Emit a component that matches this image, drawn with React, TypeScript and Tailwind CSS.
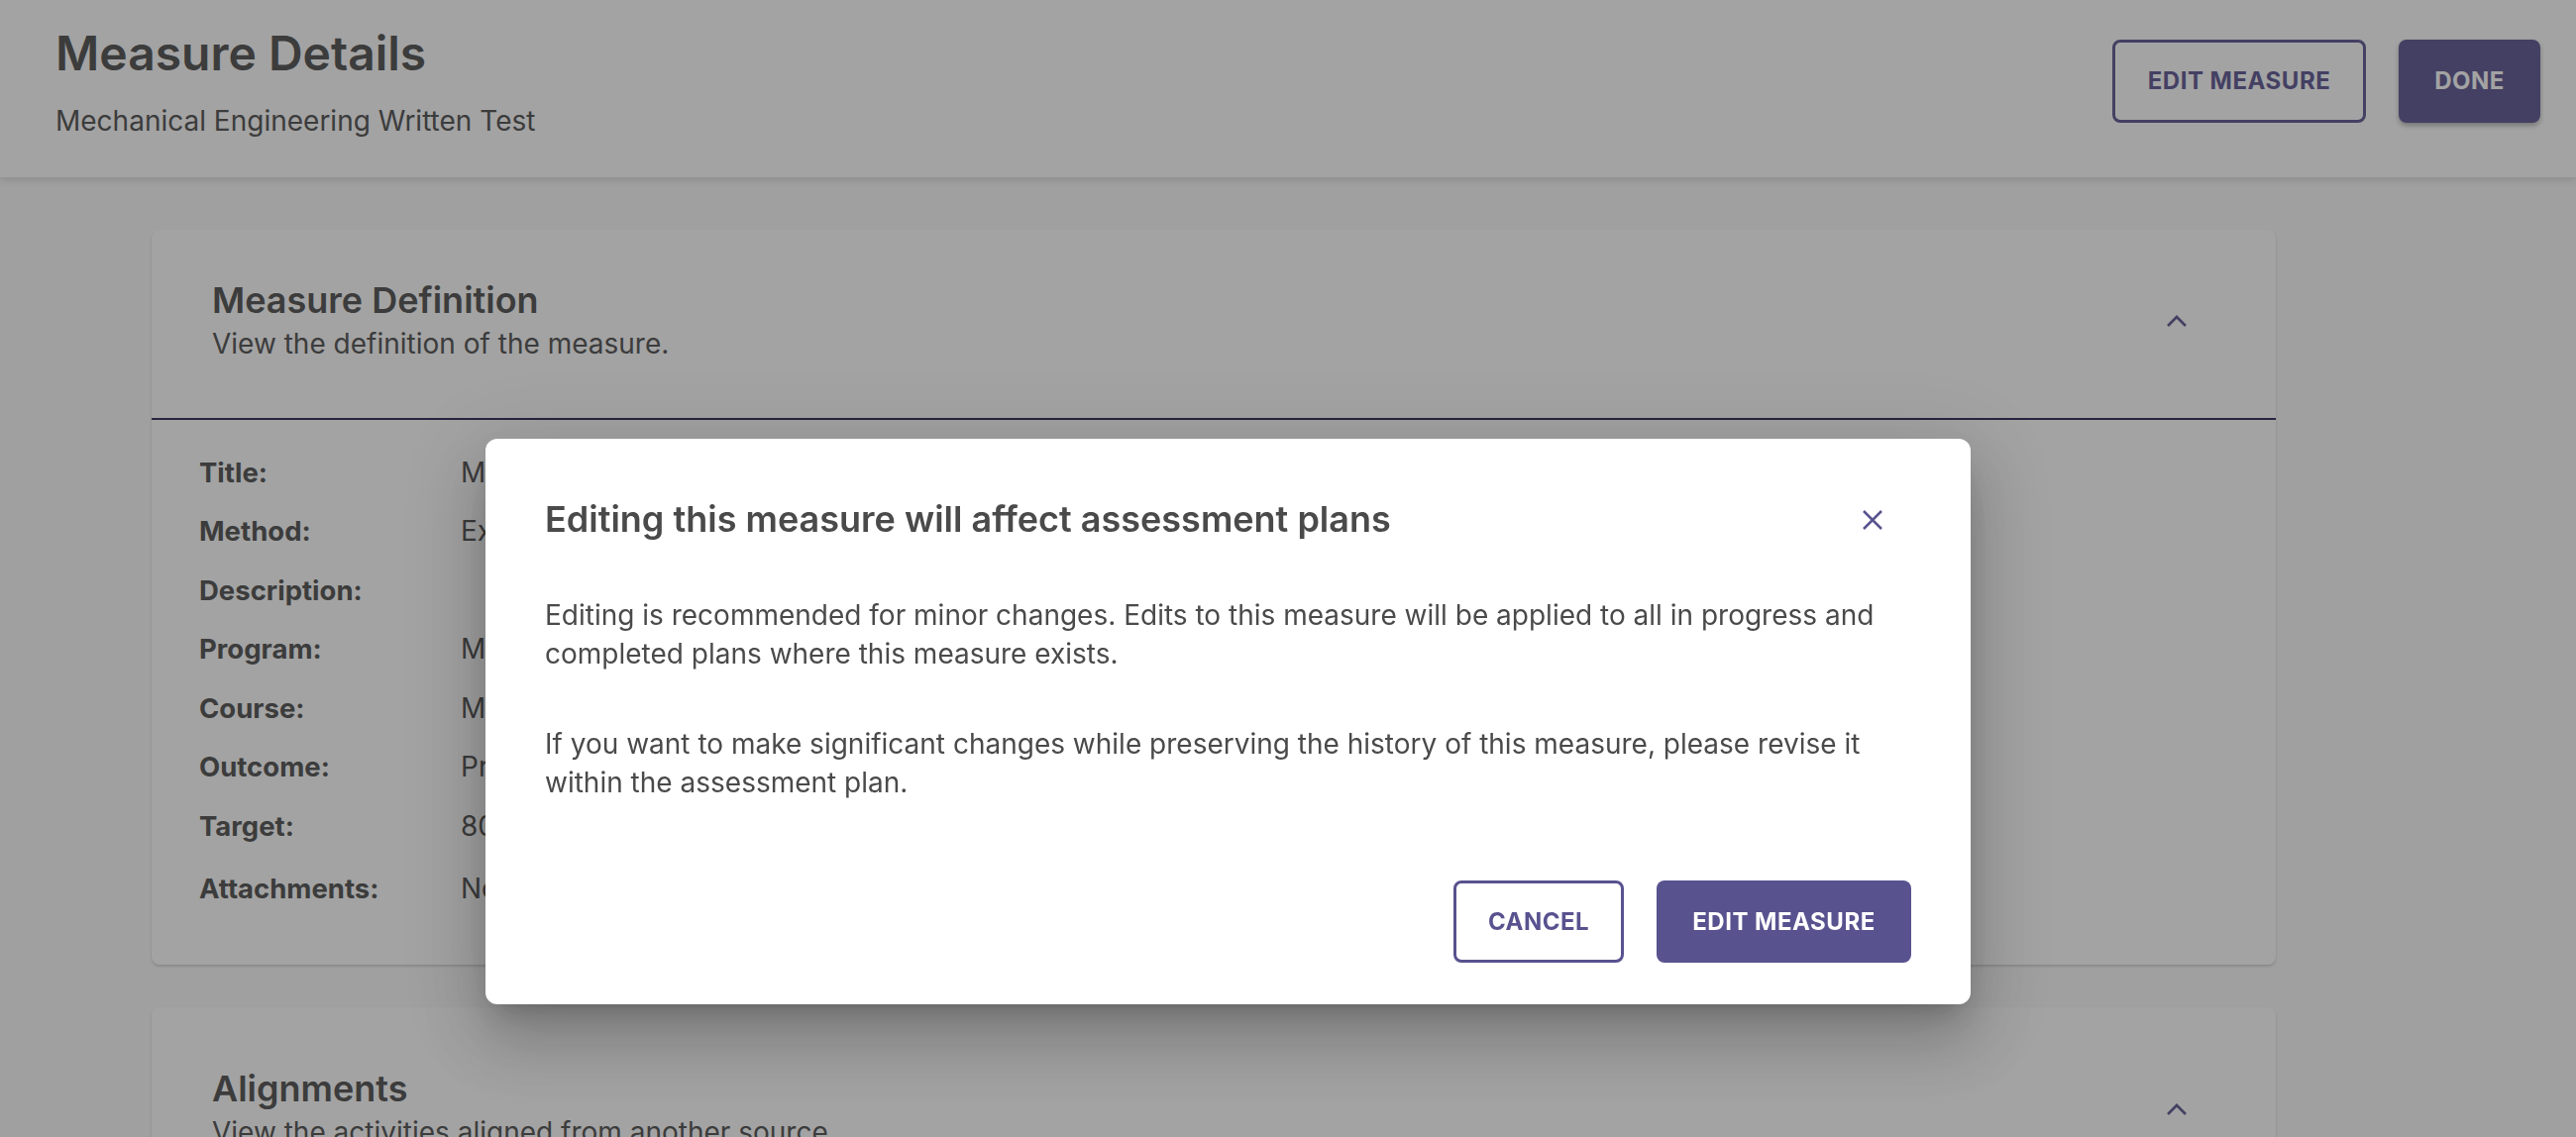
import React from 'react';

const rows: { label: string; value: string; extra?: string }[] = [
  { label: 'Title:', value: 'Mechanical Engineering Written Test' },
  { label: 'Method:', value: 'Exam' },
  { label: 'Description:', value: '' },
  { label: 'Program:', value: 'Master of Mechanical Engineering' },
  { label: 'Course:', value: 'MECH 2010: Statics' },
  { label: 'Outcome:', value: 'Problem Solving' },
  { label: 'Target:', value: '80% of students will score 70% or higher' },
  { label: 'Attachments:', value: 'No attachments', extra: 'mt-[4px]' },
];

function ChevronUp() {
  return (
    <svg width="32" height="32" viewBox="0 0 24 24" fill="none" stroke="#58528f" strokeWidth="2" strokeLinecap="square">
      <path d="m18 15-6-6-6 6" />
    </svg>
  );
}

function SectionHeader(props: { title: string; subtitle: string; className?: string }) {
  return (
    <div className={`flex items-center justify-between pl-[61px] pr-[84px] ${props.className ?? ''}`}>
      <div>
        <div className="text-[36px] leading-[43px] font-semibold">{props.title}</div>
        <div className="mt-[3px] text-[28px] leading-[38.5px]">{props.subtitle}</div>
      </div>
      <ChevronUp />
    </div>
  );
}

export default function App() {
  return (
    <div className="relative h-[1148px] overflow-hidden bg-[#fafafa] font-['Inter',sans-serif] text-[#4a4a4a]">
      {/* page header */}
      <div className="relative z-10 flex h-[179px] justify-between bg-white pl-[56px] pr-[36px] shadow-[0_3px_8px_rgba(0,0,0,0.14)]">
        <div className="pt-[25px]">
          <h1 className="text-[48px] leading-[58px] font-semibold">Measure Details</h1>
          <div className="mt-[20px] text-[28px] leading-[38.5px]">Mechanical Engineering Written Test</div>
        </div>
        <div className="flex items-start gap-[33px] pt-[40px]">
          <button className="h-[84px] w-[256px] rounded-[8px] border-[3px] border-[#58528f] text-[24px] font-bold tracking-[0.5px] text-[#58528f]">
            EDIT MEASURE
          </button>
          <button className="h-[84px] w-[143px] rounded-[8px] bg-[#58528f] text-[24px] font-bold tracking-[0.5px] text-white shadow-[0_3px_5px_rgba(0,0,0,0.3)]">
            DONE
          </button>
        </div>
      </div>

      {/* content */}
      <div className="pl-[153px] pt-[53px]">
        <div className="w-[2144px] rounded-[8px] bg-white shadow-[0_2px_3px_rgba(0,0,0,0.12),0_1px_2px_rgba(0,0,0,0.08)]">
          <SectionHeader className="pt-[50px] pb-[55px]" title="Measure Definition" subtitle="View the definition of the measure." />
          <div className="h-[2px] bg-[#2a2151]" />
          <div className="flex flex-col gap-[21px] pl-[48px] pt-[34px] pb-[57px] text-[27.5px] leading-[38.5px]">
            {rows.map((r) => (
              <div key={r.label} className={`grid grid-cols-[264px_1fr] ${r.extra ?? ''}`}>
                <div className="font-bold">{r.label}</div>
                <div className="text-[28px]">{r.value}</div>
              </div>
            ))}
          </div>
        </div>

        <div className="mt-[43px] w-[2144px] rounded-[8px] bg-white pb-[60px] shadow-[0_2px_3px_rgba(0,0,0,0.12),0_1px_2px_rgba(0,0,0,0.08)]">
          <SectionHeader className="pt-[61px]" title="Alignments" subtitle="View the activities aligned from another source." />
        </div>
      </div>

      {/* dialog */}
      <div className="fixed inset-0 z-20 bg-[rgba(42,42,42,0.43)]">
        <div className="pl-[490px] pt-[443px]">
          <div className="flex h-[571px] w-[1499px] flex-col rounded-[12px] bg-white px-[60px] pt-[60px] pb-[41px] shadow-[0_18px_25px_-12px_rgba(0,0,0,0.2),0_40px_63px_5px_rgba(0,0,0,0.14),0_15px_77px_13px_rgba(0,0,0,0.12)]">
            <div className="flex items-center justify-between">
              <h2 className="text-[36px] leading-[43px] font-semibold">Editing this measure will affect assessment plans</h2>
              <button className="mr-[29px]" aria-label="close">
                <svg width="20" height="20" viewBox="0 0 20 20" fill="none" stroke="#58528f" strokeWidth="2.5">
                  <path d="M1 1 19 19M19 1 1 19" />
                </svg>
              </button>
            </div>
            <p className="mt-[56px] text-[28px] leading-[38.5px]">
              Editing is recommended for minor changes. Edits to this measure will be applied to all in progress and completed plans where this measure exists.
            </p>
            <p className="mt-[53px] text-[28px] leading-[38.5px]">
              If you want to make significant changes while preserving the history of this measure, please revise it within the assessment plan.
            </p>
            <div className="mt-[80px] flex justify-end gap-[33px]">
              <button className="h-[83px] w-[172px] rounded-[8px] border-[3px] border-[#58528f] text-[24px] font-bold tracking-[0.5px] text-[#58528f]">
                CANCEL
              </button>
              <button className="h-[83px] w-[257px] rounded-[8px] bg-[#58528f] text-[24px] font-bold tracking-[0.5px] text-white">
                EDIT MEASURE
              </button>
            </div>
          </div>
        </div>
      </div>
    </div>
  );
}
